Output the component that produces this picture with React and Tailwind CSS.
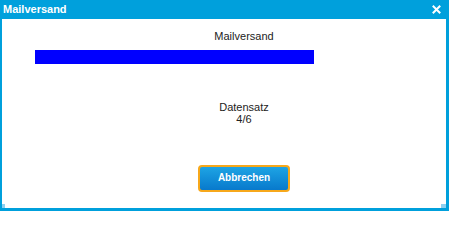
import React from 'react';

const Mailversand = () => {
  const done = 4;
  const total = 6;

  return (
    <div className="w-[449px] h-[211px] bg-[#00a0dc] flex flex-col font-['Liberation_Sans',Arial,sans-serif]">
      {/* Titelleiste */}
      <div className="h-[19px] flex items-center justify-between pl-[3px] pr-[8px]">
        <span className="text-white font-bold text-[11px] leading-[13px]">Mailversand</span>
        <svg width="9" height="9" viewBox="0 0 9 9" className="mt-[0px]">
          <path d="M1.5 1.5 L7.5 7.5 M7.5 1.5 L1.5 7.5" stroke="#ffffff" strokeWidth="2" strokeLinecap="square" />
        </svg>
      </div>

      {/* Inhalt */}
      <div className="flex-1 bg-white ml-[2px] mr-[3px] mb-[3px] relative flex flex-col">
        <div className="pl-[40px] mt-[11px] text-center text-[11px] leading-[13px] text-[#222]">Mailversand</div>

        <div className="ml-[33px] mt-[7px] w-[279px] h-[14px] bg-[#0000ff]" />

        <div className="pl-[40px] mt-[37px] text-center text-[11px] leading-[12px] text-[#222]">
          <div>Datensatz</div>
          <div>{done}/{total}</div>
        </div>

        <div className="ml-[196px] mt-[39px]">
          <button className="w-[92px] h-[27px] rounded-[4px] border-2 border-[#f7a81b] bg-gradient-to-b from-[#1ea4e4] to-[#0879cc] text-white font-bold text-[10px] leading-none">
            Abbrechen
          </button>
        </div>

        {/* Resize-Griffe */}
        <div className="absolute left-0 bottom-0 w-[3px] h-[4px] bg-[#8fd0f0]" />
        <div className="absolute right-0 bottom-0 w-[5px] h-[4px] bg-[#8fd0f0]" />
      </div>
    </div>
  );
};

export default function App() {
  return <Mailversand />;
}
